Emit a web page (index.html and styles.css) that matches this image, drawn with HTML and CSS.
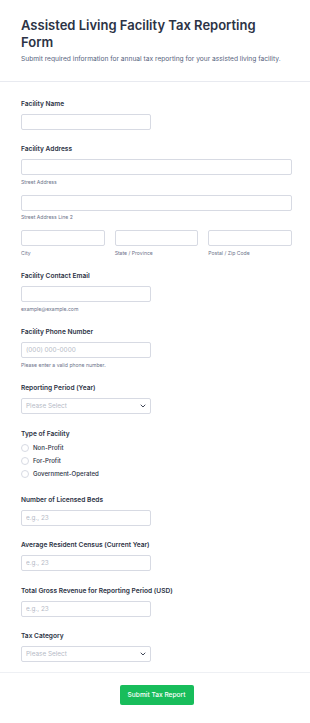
FILE: index.html
```html
<!DOCTYPE html>
<html lang="en">
<head>
    <meta charset="UTF-8">
    <meta name="viewport" content="width=device-width, initial-scale=1.0">
    <title>Assisted Living Facility Tax Reporting Form</title>
    <link rel="stylesheet" href="styles.css">
</head>
<body>
    <form class="form">
        <div class="form-header">
            <h1 class="form-title">Assisted Living Facility Tax Reporting Form</h1>
            <p class="form-subtitle">Submit required information for annual tax reporting for your assisted living facility.</p>
        </div>

        <div class="form-body">
            <div class="field">
                <label class="label">Facility Name</label>
                <input type="text" class="input half">
            </div>

            <div class="field">
                <label class="label">Facility Address</label>
                <input type="text" class="input">
                <span class="sublabel">Street Address</span>
                <input type="text" class="input next">
                <span class="sublabel">Street Address Line 2</span>
                <div class="address-row">
                    <div class="address-col">
                        <input type="text" class="input next">
                        <span class="sublabel">City</span>
                    </div>
                    <div class="address-col">
                        <input type="text" class="input next">
                        <span class="sublabel">State / Province</span>
                    </div>
                    <div class="address-col">
                        <input type="text" class="input next">
                        <span class="sublabel">Postal / Zip Code</span>
                    </div>
                </div>
            </div>

            <div class="field">
                <label class="label">Facility Contact Email</label>
                <input type="email" class="input half">
                <span class="sublabel">example@example.com</span>
            </div>

            <div class="field">
                <label class="label">Facility Phone Number</label>
                <input type="tel" class="input half" placeholder="(000) 000-0000">
                <span class="sublabel">Please enter a valid phone number.</span>
            </div>

            <div class="field">
                <label class="label">Reporting Period (Year)</label>
                <div class="select half">
                    <span>Please Select</span>
                    <svg width="6" height="4" viewBox="0 0 6 4"><path d="M1 1l2 2 2-2" fill="none" stroke="#2c3345" stroke-width="0.9" stroke-linecap="round" stroke-linejoin="round"/></svg>
                </div>
            </div>

            <div class="field">
                <label class="label">Type of Facility</label>
                <div class="radios">
                    <label class="radio"><span class="circle"></span>Non-Profit</label>
                    <label class="radio"><span class="circle"></span>For-Profit</label>
                    <label class="radio"><span class="circle"></span>Government-Operated</label>
                </div>
            </div>

            <div class="field">
                <label class="label">Number of Licensed Beds</label>
                <input type="number" class="input half" placeholder="e.g., 23">
            </div>

            <div class="field">
                <label class="label">Average Resident Census (Current Year)</label>
                <input type="number" class="input half" placeholder="e.g., 23">
            </div>

            <div class="field">
                <label class="label">Total Gross Revenue for Reporting Period (USD)</label>
                <input type="number" class="input half" placeholder="e.g., 23">
            </div>

            <div class="field last">
                <label class="label">Tax Category</label>
                <div class="select half">
                    <span>Please Select</span>
                    <svg width="6" height="4" viewBox="0 0 6 4"><path d="M1 1l2 2 2-2" fill="none" stroke="#2c3345" stroke-width="0.9" stroke-linecap="round" stroke-linejoin="round"/></svg>
                </div>
            </div>
        </div>

        <div class="form-footer">
            <button type="button" class="submit">Submit Tax Report</button>
        </div>
    </form>
</body>
</html>
```

FILE: styles.css
```css
body {
    margin: 0;
    background: #fff;
    font-family: Inter, "Noto Sans", sans-serif;
    color: #2c3345;
}
.form {
    width: 310px;
}
.form-header {
    padding: 17px 18px 0 21px;
    height: 64px;
    border-bottom: 1px solid #e8eaf0;
}
.form-title {
    margin: 0;
    max-width: 250px;
    font-size: 13px;
    line-height: 16.6px;
    font-weight: 600;
}
.form-subtitle {
    margin: 5px 0 0;
    font-size: 6.65px;
    line-height: 8px;
    color: #57647e;
}
.form-body {
    padding: 16.5px 18px 10px 21px;
    border-bottom: 1px solid #eef0f4;
}
.field {
    display: flex;
    flex-direction: column;
    align-items: flex-start;
    margin-bottom: 14.5px;
}
.field.last {
    margin-bottom: 0;
}
.label {
    font-size: 6.6px;
    line-height: 10px;
    font-weight: 600;
    margin-bottom: 5px;
}
.input {
    box-sizing: border-box;
    width: 100%;
    height: 16px;
    margin: 0;
    padding: 0 4px;
    border: 1px solid #d7dae3;
    border-radius: 2px;
    font-family: inherit;
    font-size: 6.4px;
    color: #2c3345;
    outline: none;
}
.input::placeholder {
    color: #b5bac6;
}
.input.half {
    width: 130px;
}
.input.next {
    margin-top: 9px;
}
.sublabel {
    margin-top: 3.5px;
    font-size: 5.1px;
    line-height: 7px;
    color: #6c738a;
}
.address-row {
    display: grid;
    grid-template-columns: repeat(3, 1fr);
    gap: 10px;
    width: 100%;
}
.address-col {
    display: flex;
    flex-direction: column;
}
.select {
    box-sizing: border-box;
    display: flex;
    justify-content: space-between;
    align-items: center;
    height: 16px;
    padding: 0 4px;
    border: 1px solid #d7dae3;
    border-radius: 2px;
    font-size: 6.4px;
    color: #b5bac6;
}
.select.half {
    width: 130px;
}
.radios {
    display: flex;
    flex-direction: column;
    margin-top: -2.5px;
}
.radio {
    display: flex;
    align-items: center;
    gap: 4px;
    height: 13px;
    font-size: 6.1px;
    font-weight: 500;
}
.circle {
    box-sizing: border-box;
    width: 8px;
    height: 8px;
    border: 1px solid #d7dae3;
    border-radius: 50%;
}
.form-footer {
    display: flex;
    justify-content: center;
    padding: 12px 18px 16px 21px;
}
.submit {
    width: 74px;
    height: 20px;
    border: none;
    border-radius: 2px;
    background: #18bd5b;
    color: #fff;
    font-family: inherit;
    font-size: 6.6px;
    font-weight: 500;
    cursor: pointer;
}
```
